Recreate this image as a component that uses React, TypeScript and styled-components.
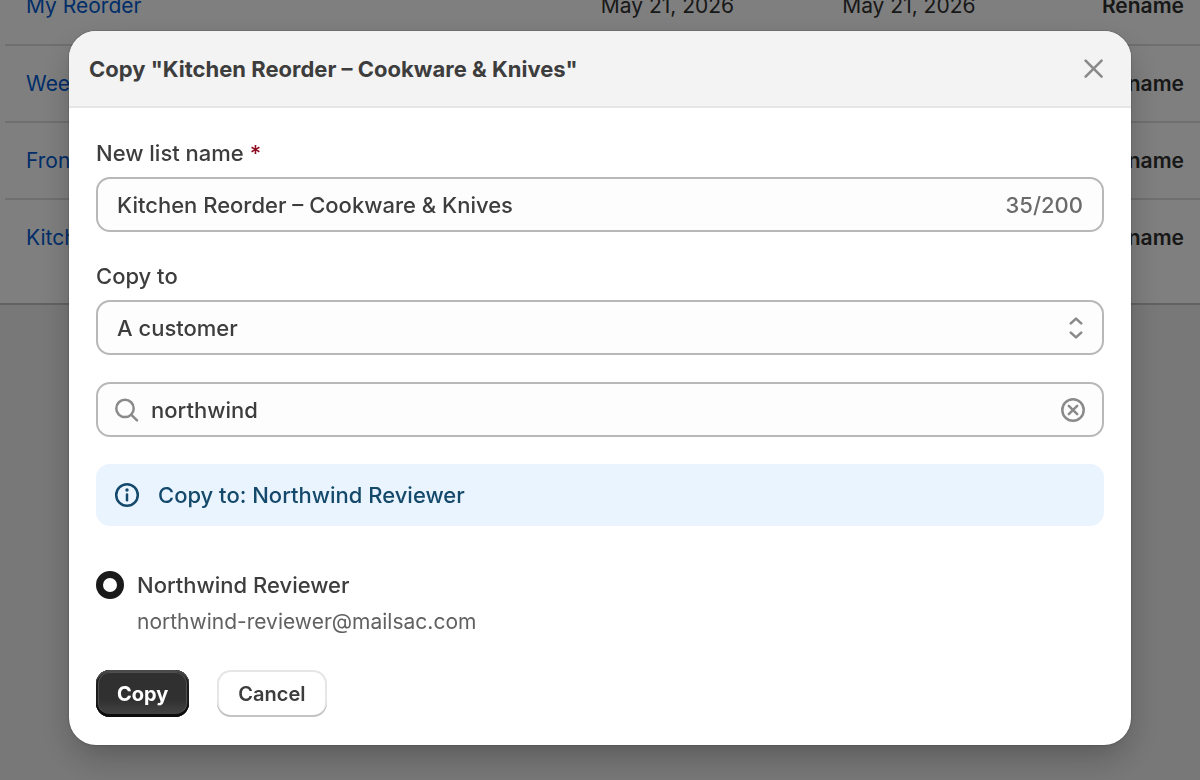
import React, { useState } from "react";
import styled, { createGlobalStyle } from "styled-components";

const GlobalStyle = createGlobalStyle`
  *, *::before, *::after { box-sizing: border-box; }
  body {
    margin: 0;
    min-height: 100vh;
    overflow: hidden;
    background: #f1f1f1;
    color: #303030;
    font-family: Inter, "Liberation Sans", sans-serif;
    font-size: 22px;
    line-height: 34px;
  }
  button, input, select { font: inherit; color: inherit; }
`;

const ListsCard = styled.main`
  margin-top: -32px;
  padding: 0 0 27px 5px;
  background: #fff;
  box-shadow: 0 2px 0 rgba(26, 26, 26, 0.2);
`;

const ListsTable = styled.table`
  width: 100%;
  table-layout: fixed;
  border-collapse: collapse;
  font-size: 21px;
  line-height: 28px;

  tr + tr { border-top: 2px solid #dfdfdf; }
`;

const Cell = styled.td<{ $width?: string; $end?: boolean }>`
  width: ${(p) => p.$width ?? "auto"};
  height: 77px;
  padding: 0 16px 0 21px;
  text-align: ${(p) => (p.$end ? "right" : "left")};
  white-space: nowrap;
`;

const ListLink = styled.a`
  color: #005bd3;
  text-decoration: none;
`;

const PlainButton = styled.button`
  padding: 0;
  border: 0;
  background: none;
  font-weight: 600;
  cursor: pointer;
`;

const Backdrop = styled.div`
  position: fixed;
  inset: 0;
  display: flex;
  align-items: flex-start;
  padding: 31px 69px;
  background: rgba(0, 0, 0, 0.5);
`;

const Dialog = styled.section`
  flex: 1;
  overflow: hidden;
  border-radius: 27px;
  background: #fff;
  color: #3d3d3d;
  font-weight: 500;
  box-shadow: 0 14px 34px -4px rgba(0, 0, 0, 0.28), 0 0 2px rgba(0, 0, 0, 0.4);
`;

const DialogHeader = styled.header`
  display: flex;
  align-items: center;
  justify-content: space-between;
  height: 77px;
  padding: 0 20px;
  border-bottom: 2px solid #e6e6e6;
  background: #f3f3f3;
`;

const DialogTitle = styled.h2`
  margin: 0;
  font-size: 22px;
  font-weight: 650;
`;

const IconButton = styled.button`
  display: flex;
  padding: 0;
  border: 0;
  background: none;
  color: #8a8a8a;
  cursor: pointer;
`;

const DialogForm = styled.form`
  display: flex;
  flex-direction: column;
  gap: 27px;
  padding: 28px 27px;
`;

const Field = styled.div`
  display: flex;
  flex-direction: column;
  gap: 7px;
`;

const Label = styled.label`
  color: inherit;
`;

const Required = styled.span`
  color: #8e0b21;
`;

const Control = styled.div<{ $icon?: boolean }>`
  display: flex;
  align-items: center;
  gap: ${(p) => (p.$icon ? "11px" : "7px")};
  height: 55px;
  padding: 0 ${(p) => (p.$icon ? "16px" : "19px")};
  border: 2px solid #b8b8b8;
  border-radius: 14px;
  background: #fdfdfd;
`;

const TextInput = styled.input`
  flex: 1;
  min-width: 0;
  padding: 0;
  border: 0;
  outline: 0;
  background: none;
`;

const Select = styled.select`
  flex: 1;
  padding: 0;
  border: 0;
  outline: 0;
  appearance: none;
  background: none;
`;

const Counter = styled.span`
  color: #6b6b6b;
`;

const Banner = styled.div`
  display: flex;
  align-items: center;
  gap: 18px;
  height: 62px;
  padding: 0 18px;
  border-radius: 14px;
  background: #eaf4ff;
  color: #14496b;
`;

const Choice = styled.div`
  display: grid;
  grid-template-columns: 28px 1fr;
  align-items: center;
  column-gap: 13px;
  row-gap: 3px;
  padding: 15px 0 4px;
`;

const Radio = styled.input`
  appearance: none;
  width: 28px;
  height: 28px;
  margin: 0;
  border: 7px solid #1a1a1a;
  border-radius: 50%;
  background: #fff;
`;

const ChoiceHelp = styled.span`
  grid-column: 2;
  color: #616161;
  font-size: 21px;
  font-weight: 400;
`;

const Actions = styled.div`
  display: flex;
  gap: 28px;
`;

const ActionButton = styled.button<{ $primary?: boolean }>`
  height: 47px;
  padding: 0 21px;
  border: 0;
  border-radius: 14px;
  font-size: 20px;
  font-weight: ${(p) => (p.$primary ? 700 : 600)};
  color: ${(p) => (p.$primary ? "#fff" : "#3d3d3d")};
  background: ${(p) =>
    p.$primary ? "linear-gradient(#303030 63%, #474747)" : "#fff"};
  box-shadow: ${(p) =>
    p.$primary
      ? "inset 0 -3px 0 #0c0c0c, inset 0 2px 0 #4a4a4a, inset 0 0 0 2px #1c1c1c, inset 0 0 0 3px #505050"
      : "inset 0 -2px 0 #c4c4c4, inset 0 0 0 2px #e6e6e6"};
  cursor: pointer;
`;

const GlyphSvg = styled.svg`
  flex: none;
  color: #8a8a8a;
`;

const CloseIcon = () => (
  <svg width="34" height="34" viewBox="0 0 34 34" fill="none" stroke="currentColor" strokeWidth="2.6" strokeLinecap="round" aria-hidden="true">
    <path d="M8.6 8.6l16 16M24.6 8.6l-16 16" />
  </svg>
);

const SearchIcon = () => (
  <GlyphSvg width="26" height="26" viewBox="0 0 26 26" fill="none" stroke="currentColor" strokeWidth="2.5" strokeLinecap="round" aria-hidden="true">
    <circle cx="11" cy="11.4" r="8.7" />
    <path d="M17.4 17.8l5.6 5.6" />
  </GlyphSvg>
);

const ClearIcon = () => (
  <svg width="26" height="26" viewBox="0 0 26 26" fill="none" stroke="currentColor" strokeWidth="2.5" strokeLinecap="round" aria-hidden="true">
    <circle cx="13" cy="13" r="10.7" />
    <path d="M8.8 8.8l8.4 8.4M17.2 8.8l-8.4 8.4" />
  </svg>
);

const SelectIcon = () => (
  <GlyphSvg width="14" height="24" viewBox="0 0 14 24" fill="none" stroke="currentColor" strokeWidth="2.6" strokeLinecap="round" strokeLinejoin="round" aria-hidden="true">
    <path d="M1.8 7.4L7 2.6l5.2 4.8M1.8 16.6l5.2 4.8 5.2-4.8" />
  </GlyphSvg>
);

const InfoIcon = () => (
  <svg width="26" height="26" viewBox="0 0 26 26" fill="none" stroke="currentColor" strokeWidth="2.5" strokeLinecap="round" aria-hidden="true">
    <circle cx="13" cy="13" r="10.8" />
    <path d="M13 12.4v5.8" />
    <circle cx="13" cy="8" r="1.7" fill="currentColor" stroke="none" />
  </svg>
);

const lists = [
  "My Reorder",
  "Weekly Restock",
  "Front of House",
  "Kitchen Reorder – Cookware & Knives",
];

export default function App() {
  const [name, setName] = useState("Kitchen Reorder – Cookware & Knives");
  const [query, setQuery] = useState("northwind");

  return (
    <>
      <GlobalStyle />
      <ListsCard>
        <ListsTable>
          <tbody>
            {lists.map((list) => (
              <tr key={list}>
                <Cell $width="48.1%"><ListLink href="#list">{list}</ListLink></Cell>
                <Cell $width="20.2%">May 21, 2026</Cell>
                <Cell $width="18%">May 21, 2026</Cell>
                <Cell $end><PlainButton type="button">Rename</PlainButton></Cell>
              </tr>
            ))}
          </tbody>
        </ListsTable>
      </ListsCard>
      <Backdrop>
        <Dialog role="dialog" aria-modal="true" aria-labelledby="copy-title">
          <DialogHeader>
            <DialogTitle id="copy-title">Copy "Kitchen Reorder – Cookware &amp; Knives"</DialogTitle>
            <IconButton type="button" aria-label="Close"><CloseIcon /></IconButton>
          </DialogHeader>
          <DialogForm onSubmit={(e) => e.preventDefault()}>
            <Field>
              <Label htmlFor="list-name">New list name <Required>*</Required></Label>
              <Control>
                <TextInput id="list-name" value={name} maxLength={200} onChange={(e) => setName(e.target.value)} />
                <Counter>{name.length}/200</Counter>
              </Control>
            </Field>
            <Field>
              <Label htmlFor="copy-to">Copy to</Label>
              <Control>
                <Select id="copy-to" defaultValue="customer">
                  <option value="customer">A customer</option>
                </Select>
                <SelectIcon />
              </Control>
            </Field>
            <Control $icon>
              <SearchIcon />
              <TextInput aria-label="Search customers" value={query} onChange={(e) => setQuery(e.target.value)} />
              <IconButton type="button" aria-label="Clear" onClick={() => setQuery("")}><ClearIcon /></IconButton>
            </Control>
            <Banner role="status"><InfoIcon />Copy to: Northwind Reviewer</Banner>
            <Choice>
              <Radio type="radio" id="customer-1" name="customer" defaultChecked aria-describedby="customer-1-help" />
              <Label htmlFor="customer-1">Northwind Reviewer</Label>
              <ChoiceHelp id="customer-1-help">northwind-reviewer@mailsac.com</ChoiceHelp>
            </Choice>
            <Actions>
              <ActionButton $primary type="submit">Copy</ActionButton>
              <ActionButton type="button">Cancel</ActionButton>
            </Actions>
          </DialogForm>
        </Dialog>
      </Backdrop>
    </>
  );
}
